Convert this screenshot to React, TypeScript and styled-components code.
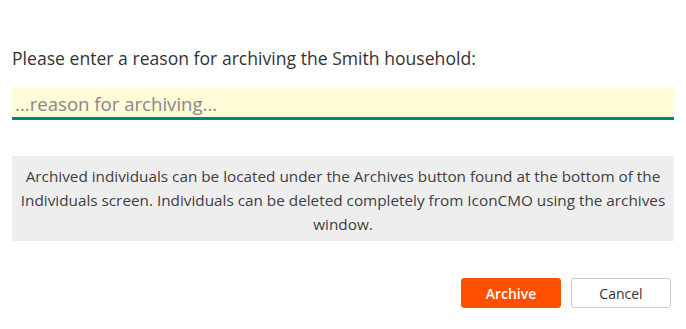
import React from "react";
import styled, { createGlobalStyle } from "styled-components";

const GlobalStyle = createGlobalStyle`
  body {
    margin: 0;
    background: #ffffff;
    font-family: "Open Sans", "Noto Sans", sans-serif;
    color: #333333;
  }
`;

const App = () => (
  <>
    <GlobalStyle />
    <Dialog>
      <Prompt>Please enter a reason for archiving the Smith household:</Prompt>
      <ReasonInput placeholder="...reason for archiving..." />
      <InfoBox>
        Archived individuals can be located under the Archives button found at the bottom of the
        Individuals screen. Individuals can be deleted completely from IconCMO using the archives
        window.
      </InfoBox>
      <Actions>
        <Button primary>Archive</Button>
        <Button>Cancel</Button>
      </Actions>
    </Dialog>
  </>
);

export default App;

const Dialog = styled.div`
  display: flex;
  flex-direction: column;
  padding: 44px 12px 0 12px;
  width: 662px;
`;

const Prompt = styled.div`
  font-size: 17.6px;
  line-height: 28px;
  color: #333333;
`;

const ReasonInput = styled.input`
  margin-top: 16px;
  height: 32px;
  box-sizing: border-box;
  border: none;
  border-bottom: 3px solid #00808a;
  background: #fffbd6;
  padding: 1px 3px 0 3px;
  font-family: inherit;
  font-size: 18.6px;
  color: #333333;
  outline: none;

  &::placeholder {
    color: #888888;
  }
`;

const InfoBox = styled.div`
  margin-top: 36px;
  background: #eeeeee;
  padding: 8px 6px 5px 6px;
  text-align: center;
  font-size: 15.3px;
  line-height: 24px;
  color: #404040;
`;

const Actions = styled.div`
  display: flex;
  justify-content: flex-end;
  gap: 10px;
  margin-top: 37px;
  padding-right: 3px;
`;

const Button = styled.button<{ primary?: boolean }>`
  width: 100px;
  height: 30px;
  border-radius: 3px;
  font-family: inherit;
  font-size: 14px;
  cursor: pointer;
  border: 1px solid ${(p) => (p.primary ? "#ff4f00" : "#cccccc")};
  background: ${(p) => (p.primary ? "#ff4f00" : "#ffffff")};
  color: ${(p) => (p.primary ? "#ffffff" : "#333333")};
  font-weight: ${(p) => (p.primary ? 600 : 400)};
`;
